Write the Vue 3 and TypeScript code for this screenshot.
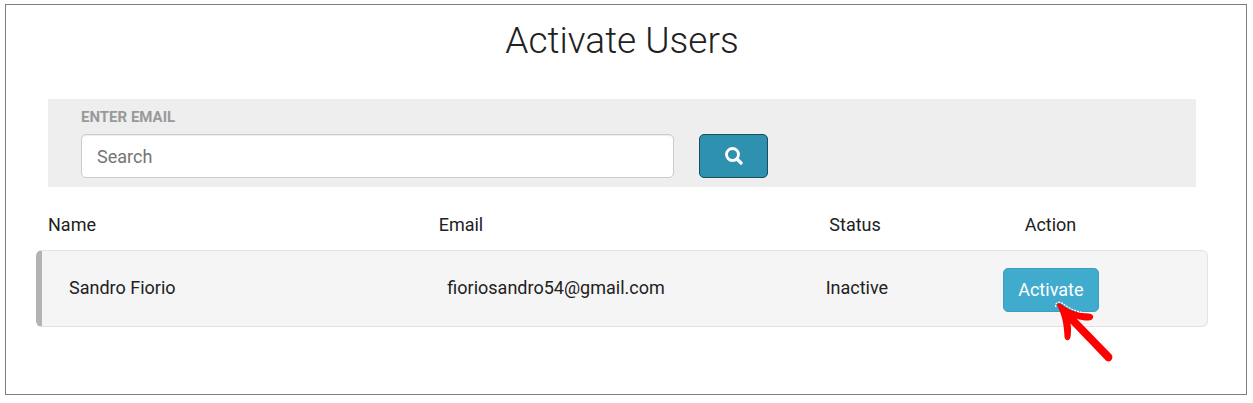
<script setup lang="ts">
import { ref } from 'vue'

interface User {
  name: string
  email: string
  status: string
}

const query = ref('')
const users = ref<User[]>([
  { name: 'Sandro Fiorio', email: 'fioriosandro54@gmail.com', status: 'Inactive' },
])

function activate(user: User) {
  user.status = 'Active'
}
</script>

<template>
  <main class="panel">
    <h1 class="title">Activate Users</h1>

    <form class="search" @submit.prevent>
      <label class="search-label" for="email">ENTER EMAIL</label>
      <div class="search-row">
        <input id="email" v-model="query" class="search-input" type="text" placeholder="Search" />
        <button class="search-button" type="submit" aria-label="Search">
          <svg width="18" height="18" viewBox="0 0 18 18" fill="none" stroke="#fff" aria-hidden="true">
            <circle cx="7.5" cy="7.5" r="6" stroke-width="2.8" />
            <path d="M12 12 L16 16" stroke-width="3.2" stroke-linecap="round" />
          </svg>
        </button>
      </div>
    </form>

    <table class="users">
      <thead>
        <tr class="head-row">
          <th scope="col">Name</th>
          <th scope="col">Email</th>
          <th scope="col">Status</th>
          <th scope="col">Action</th>
        </tr>
      </thead>
      <tbody>
        <tr v-for="user in users" :key="user.email" class="user-row">
          <td>{{ user.name }}</td>
          <td>{{ user.email }}</td>
          <td>{{ user.status }}</td>
          <td class="action-cell">
            <button class="activate" type="button" @click="activate(user)">Activate</button>
            <svg class="pointer" width="60" height="62" viewBox="0 0 60 62" aria-hidden="true">
              <path
                d="M3 4.500 C2.500 2.500 5 1.500 7 3 C14 8.500 23 12.500 35 12.500 C41 13 40.500 19.500 34 19.500 C30 19.500 26 19 22.500 17.500 L57.500 53.500 C60.500 57.500 55.500 63 51.500 59 L16.500 22.500 C17.500 28 17 32 16.500 36 C15.500 40.500 11 40 10.500 36 C10 24 8.500 14.500 3 4.500 Z"
                fill="#fe0000"
              />
              <path
                d="M2 6 C0 2 5 0 8 2 C15 7.500 23 11 30 11.500"
                fill="none"
                stroke="#fff"
                stroke-width="1.2"
                stroke-dasharray="2 1"
              />
            </svg>
          </td>
        </tr>
      </tbody>
    </table>
  </main>
</template>

<style>
body {
  background: #fff;
}
</style>

<style scoped>
* {
  box-sizing: border-box;
}

.panel {
  margin: 4px 6px 8px 5px;
  padding: 12px 38px 67px 30px;
  border: 1px solid #7f7f7f;
  color: #212121;
  font: 400 18px/26px Roboto, sans-serif;
}

.title {
  margin: 0 0 34px;
  font-size: 37px;
  font-weight: 300;
  line-height: 48px;
  text-align: center;
}

.search {
  margin: 0 12px;
  padding: 8px 33px 9px;
  background: #eee;
}

.search-label {
  display: block;
  margin-bottom: 7px;
  color: #999;
  font-size: 15px;
  font-weight: 700;
  line-height: 20px;
}

.search-row {
  display: flex;
  gap: 25px;
}

.search-input {
  flex: 0 1 593px;
  min-width: 0;
  height: 44px;
  padding: 0 15px;
  border: 1px solid #ccc;
  border-radius: 5px;
  background: #fff;
  box-shadow: inset 0 1px 1px rgba(0, 0, 0, 0.075);
  color: #212121;
  font: inherit;
}

.search-input::placeholder {
  color: #757575;
  opacity: 1;
}

.search-button {
  display: flex;
  align-items: center;
  justify-content: center;
  width: 69px;
  height: 44px;
  padding: 0;
  border: 1px solid #1b4f5f;
  border-radius: 5px;
  background: #2e91b0;
  cursor: pointer;
}

.users,
.users thead,
.users tbody {
  display: block;
}

.users {
  margin-top: 25px;
}

.head-row,
.user-row {
  display: grid;
  grid-template-columns: 4fr 4fr 2fr 2fr;
}

.head-row {
  margin-bottom: 12px;
}

.head-row th {
  padding: 0 12px;
  font-weight: 400;
  text-align: left;
}

.user-row {
  align-items: start;
  padding: 17px 15px 14px;
  border: 1px solid #e3e3e3;
  border-left: 6px solid #b3b3b3;
  border-radius: 6px;
  background: #f5f5f5;
}

.user-row td {
  padding: 7px 12px 0;
}

.user-row .action-cell {
  position: relative;
  padding: 0;
}

.activate {
  display: block;
  width: 96px;
  height: 44px;
  padding: 0;
  border: 1px solid #3a9fc0;
  border-radius: 5px;
  background: #41abce;
  color: #fff;
  font: inherit;
  cursor: pointer;
}

.pointer {
  position: absolute;
  top: 33px;
  left: 51px;
  pointer-events: none;
}
</style>
